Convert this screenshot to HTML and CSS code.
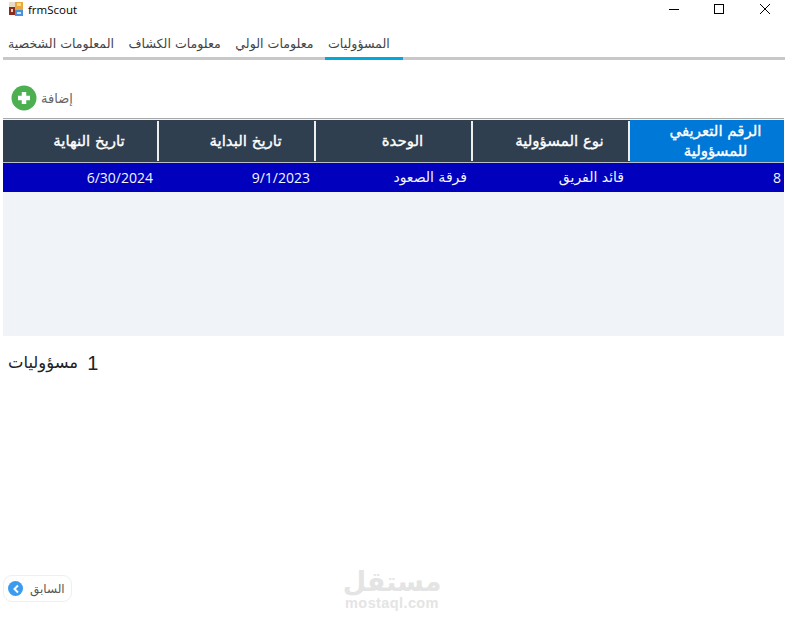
FILE: index.html
```html
<!DOCTYPE html>
<html lang="ar">
<head>
<meta charset="utf-8">
<title>frmScout</title>
<link rel="stylesheet" href="styles.css">
</head>
<body>
<div class="window">
  <header class="titlebar">
    <svg class="app-icon" width="14" height="14" viewBox="0 0 14 14"><rect x="0" y="0" width="6" height="5" fill="#e9dcc4"/><rect x="6" y="0" width="8" height="8" fill="#e8a93c"/><rect x="8" y="1" width="4" height="3" fill="#f6d98a"/><rect x="0" y="5" width="6" height="8" fill="#8c2a1c"/><rect x="2" y="7" width="2" height="3" fill="#e8d9c0"/><rect x="6" y="8" width="8" height="6" fill="#4a8fdc"/><rect x="8" y="10" width="4" height="2" fill="#cfe3fa"/></svg>
    <span class="title">frmScout</span>
    <div class="win-controls">
      <svg width="12" height="12" viewBox="0 0 12 12"><path d="M1 6.5H11" stroke="#000" fill="none"/></svg>
      <svg width="12" height="12" viewBox="0 0 12 12"><rect x="1.5" y="1.5" width="9" height="9" stroke="#000" fill="none"/></svg>
      <svg class="close" width="12" height="12" viewBox="0 0 12 12"><path d="M1 1L11 11M11 1L1 11" stroke="#000" fill="none"/></svg>
    </div>
  </header>
  <nav class="tabs">
    <span class="tab">المعلومات الشخصية</span>
    <span class="tab">معلومات الكشاف</span>
    <span class="tab">معلومات الولي</span>
    <span class="tab active">المسؤوليات</span>
  </nav>
  <div class="toolbar">
    <svg width="26" height="26" viewBox="0 0 26 26"><circle cx="13" cy="13" r="12.5" fill="#4caf50"/><path d="M13 7V19M7 13H19" stroke="#fff" stroke-width="4.5"/></svg>
    <span class="add-label">إضافة</span>
  </div>
  <section class="grid">
    <div class="grid-head">
      <div class="hcell">تاريخ النهاية</div>
      <div class="hcell">تاريخ البداية</div>
      <div class="hcell">الوحدة</div>
      <div class="hcell">نوع المسؤولية</div>
      <div class="hcell hcell-id">الرقم التعريفي<br>للمسؤولية</div>
    </div>
    <div class="grid-row">
      <div class="cell date">6/30/2024</div>
      <div class="cell date">9/1/2023</div>
      <div class="cell ar">فرقة الصعود</div>
      <div class="cell ar">قائد الفريق</div>
      <div class="cell num">8</div>
    </div>
  </section>
  <p class="count"><span class="count-num">1</span><span class="count-label">مسؤوليات</span></p>
  <div class="footer">
    <button class="back">
      <span class="chev"><svg width="8" height="10" viewBox="0 0 8 10"><path d="M6 1.5L2.5 5L6 8.5" stroke="#fff" stroke-width="2" fill="none"/></svg></span>
      <span>السابق</span>
    </button>
    <div class="watermark">
      <div class="wm-ar">مستقل</div>
      <div class="wm-en">mostaql.com</div>
    </div>
  </div>
</div>
</body>
</html>
```
FILE: styles.css
```css
* { box-sizing: border-box; }
html, body { margin: 0; padding: 0; background: #fff; }
body { font-family: "Liberation Sans", "DejaVu Sans", sans-serif; }
.window { width: 785px; height: 625px; display: flex; flex-direction: column; overflow: hidden; }
.titlebar { height: 18px; display: flex; align-items: center; padding-left: 9px; color: #000; font: 11.5px "Open Sans", "Liberation Sans", sans-serif; }
.app-icon { margin-right: 5px; }
.win-controls { margin-left: auto; display: flex; gap: 33px; padding-right: 14px; }
.close { margin-left: 1px; }
.tabs { margin: 13px 0 0 3px; height: 29px; display: flex; border-bottom: 3px solid #c8c8c8; padding-left: 5px; font: 12.6px "DejaVu Sans", sans-serif; color: #444; direction: ltr; }
.tab { height: 29px; line-height: 26px; padding: 0 14.5px 0 0; white-space: nowrap; }
.tab.active { border-bottom: 3px solid #00a8dc; padding: 0 13px 0 3px; margin-left: -3px; }
.toolbar { margin-top: 24px; height: 28px; padding-left: 11px; display: flex; align-items: center; gap: 4px; }
.add-label { font: 13px "DejaVu Sans", sans-serif; color: #666; }
.grid { margin: 6px 1px 0 3px; height: 218px; background: #f0f4f9; border-top: 1px solid #a9a9a9; padding-top: 1px; }
.grid-head { height: 43px; display: grid; grid-template-columns: 156px 157px 157px 157px 1fr; background: #2f3f50; padding-top: 1px; border-bottom: 1px solid #b8bfc8; }
.hcell { height: 40px; color: #fff; font: 15px/20px "DejaVu Sans", sans-serif; -webkit-text-stroke: 0.35px #fff; display: flex; align-items: center; justify-content: center; text-align: center; direction: rtl; border-right: 2px solid #eee; padding-left: 18px; }
.hcell:last-child { border-right: 0; padding-left: 17px; }
.hcell-id { background: #0078d7; margin-top: -1px; height: 42px; }
.grid-row { height: 29px; display: grid; grid-template-columns: 156px 157px 157px 157px 1fr; background: #0000bd; color: #f2f6ff; font: 14px/29px "Open Sans", "DejaVu Sans", sans-serif; text-align: right; }
.cell { padding-right: 6px; }
.ar { font-family: "DejaVu Sans", sans-serif; font-size: 14px; }
.num { padding-right: 3px; font-size: 14px; }
.count { margin: 14px 0 0 8px; display: flex; flex-direction: row-reverse; justify-content: flex-end; align-items: center; gap: 9px; height: 26px; color: #222; }
.count-num { font: 20px/24px "Liberation Sans", sans-serif; }
.count-label { font: 16.4px/24px "DejaVu Sans", sans-serif; }
.footer { margin-top: auto; padding: 0 0 14px 3px; display: flex; align-items: flex-end; }
.back { width: 69px; height: 27px; margin-bottom: 9px; border: 1px solid #efefef; border-radius: 9px; background: #fff; display: flex; align-items: center; gap: 7px; padding: 0 0 0 4px; font: 12px "DejaVu Sans", sans-serif; color: #555; }
.chev { width: 15px; height: 15px; border-radius: 50%; background: #3a9bf0; display: flex; align-items: center; justify-content: center; }
.watermark { margin-left: 270px; width: 100px; text-align: center; color: #e4e4e4; }
.wm-ar { font: bold 27px/27px "DejaVu Sans", sans-serif; }
.wm-en { font: bold 14.5px/16px "Liberation Sans", sans-serif; letter-spacing: 0.4px; }
```
